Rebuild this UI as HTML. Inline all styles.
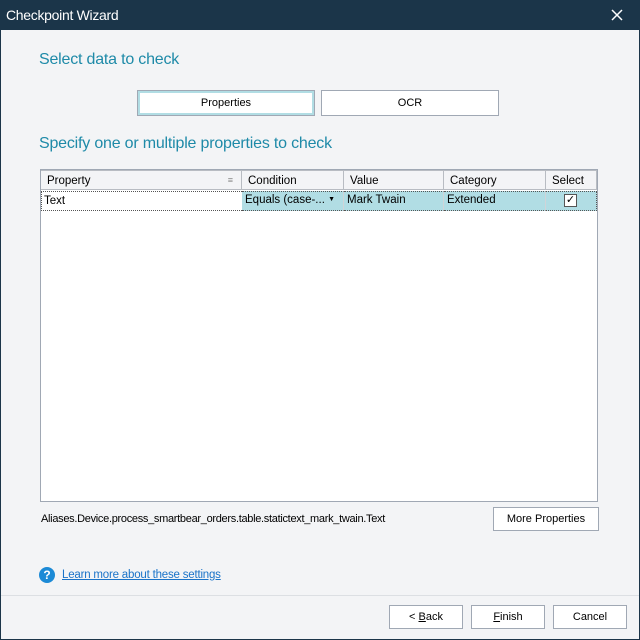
<!DOCTYPE html>
<html><head><style>
*{margin:0;padding:0;box-sizing:border-box}
body{width:640px;height:640px;background:#1b3549;font-family:"Liberation Sans",sans-serif;font-size:11.5px;color:#000;position:relative;overflow:hidden}
.a{position:absolute}
.win{left:1px;top:30px;width:638px;height:609px;background:#f3f4f6}
.h{color:#1e8aa8;font-size:16px;letter-spacing:-0.2px}
.btn{background:#fff;border:1px solid #a0a8b4;text-align:center;font-size:11px}
.hd{top:171px;height:19px;border-right:1px solid #b8bcc2;padding:4px 0 0 6px;background:#f3f4f6;border-bottom:1px solid #b8bcc2}
.cl{top:191px;height:20px;padding:3px 0 0 3px;background:#b1dde4;border-right:1px solid #d0d4d8}
</style></head><body>
<div class="a" style="left:6px;top:7px;color:#fff;font-size:14px;letter-spacing:-0.3px">Checkpoint Wizard</div>
<svg class="a" style="left:611px;top:9px" width="12" height="12"><path d="M1 1L11 11M11 1L1 11" stroke="#fff" stroke-width="1.5"/></svg>
<div class="a win"></div>
<div class="a h" style="left:39px;top:51px">Select data to check</div>
<div class="a btn" style="left:137px;top:90px;width:178px;height:26px;box-shadow:inset 0 0 0 2px #b1dde4;padding-top:6px">Properties</div>
<div class="a btn" style="left:321px;top:90px;width:178px;height:26px;padding-top:6px">OCR</div>
<div class="a h" style="left:39px;top:135px">Specify one or multiple properties to check</div>
<div class="a" style="left:40px;top:169px;width:558px;height:333px;background:#fff;border:1px solid #a0a8b4"></div>
<div class="a" style="left:41px;top:170px;width:556px;height:1px;background:#b8bcc2"></div>
<div class="a hd" style="left:41px;width:201px">Property<span style="position:absolute;right:8px;top:4px;color:#888;font-size:9px">≡</span></div>
<div class="a hd" style="left:242px;width:102px">Condition</div>
<div class="a hd" style="left:344px;width:100px">Value</div>
<div class="a hd" style="left:444px;width:102px">Category</div>
<div class="a hd" style="left:546px;width:51px">Select</div>
<div class="a" style="left:41px;top:191px;width:201px;height:20px;background:#fff;padding:3px 0 0 2px;border:1px dotted #555;border-right:none">Text</div>
<div class="a cl" style="left:242px;width:102px;border-top:1px dotted #555;border-bottom:1px dotted #555;padding-top:2px">Equals (case-...<span style="position:absolute;right:8px;top:4px;font-size:7px">▼</span></div>
<div class="a cl" style="left:344px;width:100px;border-top:1px dotted #555;border-bottom:1px dotted #555;padding-top:2px">Mark Twain</div>
<div class="a cl" style="left:444px;width:102px;border-top:1px dotted #555;border-bottom:1px dotted #555;padding-top:2px">Extended</div>
<div class="a cl" style="left:546px;width:51px;border:1px dotted #555;border-left:none"></div>
<div class="a" style="left:564px;top:194px;width:13px;height:13px;background:#fff;border:1px solid #555;font-size:11px;line-height:11px;text-align:center">✓</div>
<div class="a" style="left:41px;top:513px;font-size:11px;letter-spacing:-0.3px">Aliases.Device.process_smartbear_orders.table.statictext_mark_twain.Text</div>
<div class="a btn" style="left:493px;top:507px;width:106px;height:24px;padding-top:5px">More Properties</div>
<div class="a" style="left:39px;top:567px;width:16px;height:16px;border-radius:50%;background:#1c8ad6;color:#fff;font-weight:bold;text-align:center;font-size:12px;line-height:16px">?</div>
<div class="a" style="left:62px;top:569px;color:#1a73c8;text-decoration:underline;font-size:11.5px;letter-spacing:-0.2px">Learn more about these settings</div>
<div class="a" style="left:1px;top:595px;width:638px;height:1px;background:#dcdfe3"></div>
<div class="a btn" style="left:389px;top:605px;width:74px;height:24px;padding-top:5px">&lt; <u>B</u>ack</div>
<div class="a btn" style="left:471px;top:605px;width:74px;height:24px;padding-top:5px"><u>F</u>inish</div>
<div class="a btn" style="left:553px;top:605px;width:74px;height:24px;padding-top:5px">Cancel</div>
</body></html>
